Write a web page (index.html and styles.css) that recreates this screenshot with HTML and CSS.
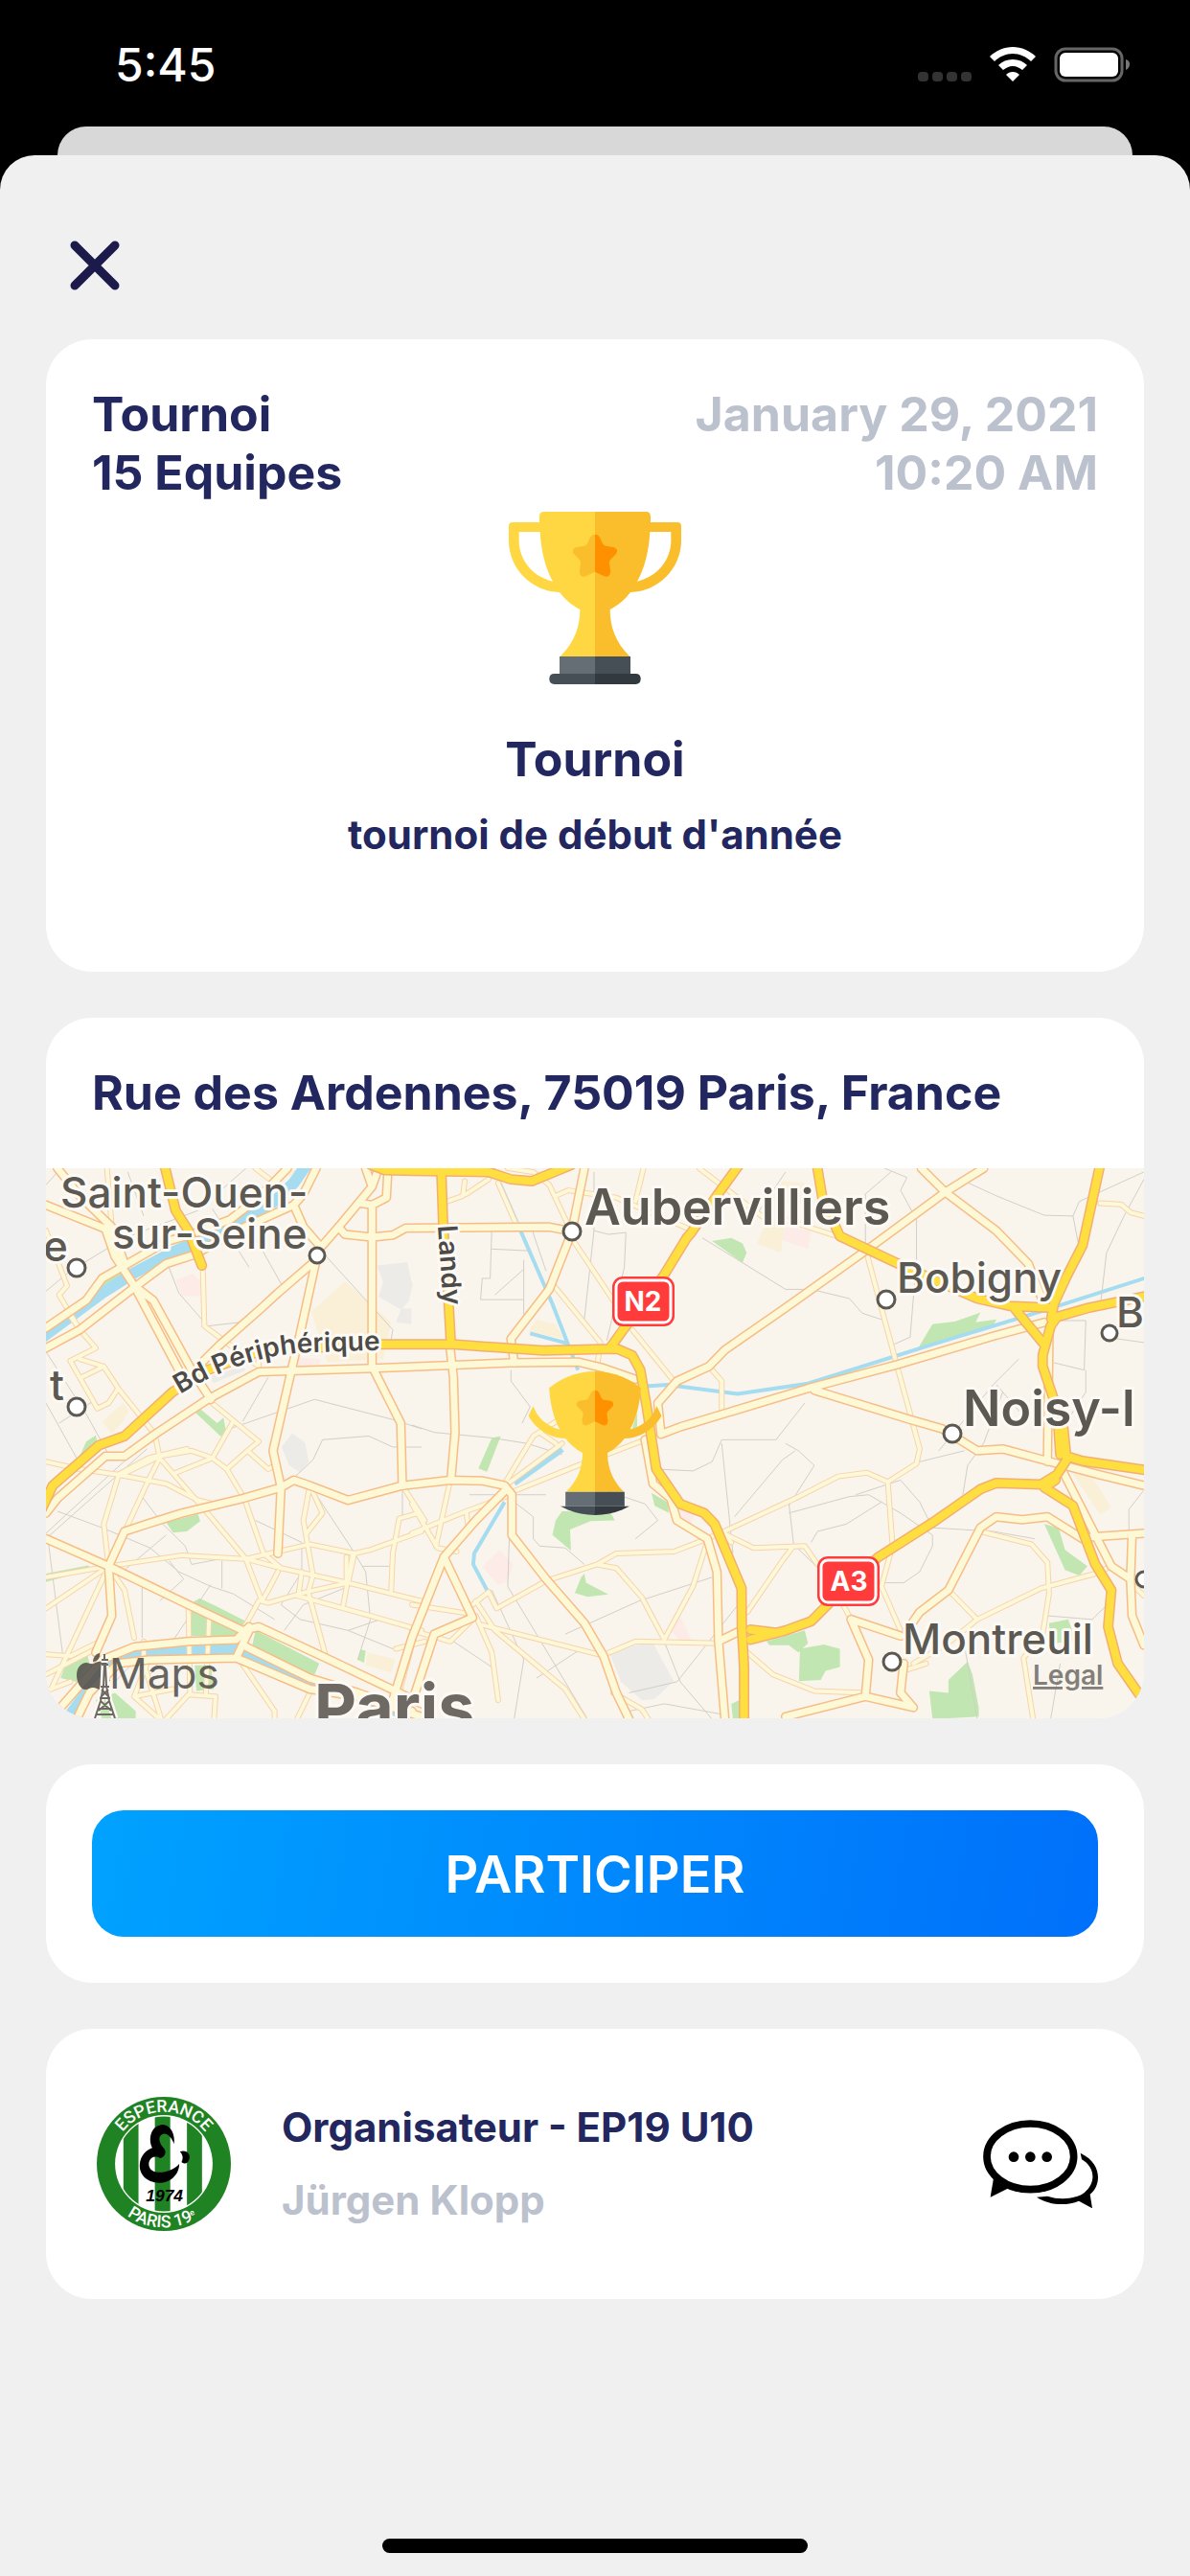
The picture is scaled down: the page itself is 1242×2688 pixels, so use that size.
FILE: index.html
```html
<!DOCTYPE html>
<html lang="fr">
<head>
    <meta charset="UTF-8">
    <meta name="viewport" content="width=device-width, initial-scale=1.0">
    <title>Tournoi</title>
    <link rel="stylesheet" href="styles.css">
</head>
<body>
    <!-- Shared drawings -->
    <svg class="defs" aria-hidden="true">
        <symbol id="trophy" viewBox="93 72 540 540">
            <g>
                <path fill-rule="evenodd" d="M364 72H203Q189 72 189 88V105H105Q93 105 93 117V162C93 250 165 322 252 324C268 345 290 365 316 378C316 430 300 480 254 525H364ZM125 135H191C194 195 208 250 231 290C170 276 125 225 125 162Z" fill="#ffd743"/>
                <path d="M363 143C354 143 350 148 346 156L339 172Q336 178 329 179L309 182C294 184 289 196 299 206L314 221Q319 226 318 233L315 255C313 270 322 280 336 273L363 260Z" fill="#fabe2c"/>
                <path d="M252 525H363V579H252Z" fill="#656d75"/>
                <path d="M363 579H236Q220 579 220 595Q220 612 236 612H363Z" fill="#474f56"/>
            </g>
            <g transform="translate(726) scale(-1 1)">
                <path fill-rule="evenodd" d="M363 72H203Q189 72 189 88V105H105Q93 105 93 117V162C93 250 165 322 252 324C268 345 290 365 316 378C316 430 300 480 254 525H363ZM125 135H191C194 195 208 250 231 290C170 276 125 225 125 162Z" fill="#fabe2c"/>
                <path d="M363 143C354 143 350 148 346 156L339 172Q336 178 329 179L309 182C294 184 289 196 299 206L314 221Q319 226 318 233L315 255C313 270 322 280 336 273L363 260Z" fill="#ff9100"/>
                <path d="M252 525H363V579H252Z" fill="#474f56"/>
                <path d="M363 579H236Q220 579 220 595Q220 612 236 612H363Z" fill="#32393f"/>
            </g>
        </symbol>
    </svg>

    <header class="status-bar">
        <span class="time">5:45</span>
        <svg class="status-icons" viewBox="0 0 222 38" aria-hidden="true">
            <g fill="#333">
                <rect x="0" y="26" width="11" height="10" rx="4"/>
                <rect x="15" y="26" width="11" height="10" rx="4"/>
                <rect x="30" y="26" width="11" height="10" rx="4"/>
                <rect x="45" y="26" width="11" height="10" rx="4"/>
            </g>
            <g fill="#fff">
                <path d="M99 0C108 0 117 4 123 10L118 15C113 10 106 7 99 7S85 10 80 15L75 10C81 4 90 0 99 0Z"/>
                <path d="M99 13C105 13 110 15 114 19L109 24C106 22 103 20 99 20S92 22 89 24L84 19C88 15 93 13 99 13Z"/>
                <path d="M99 26C102 26 104 27 106 29L99 36L92 29C94 27 96 26 99 26Z"/>
                <rect x="148" y="6" width="61" height="25" rx="6"/>
            </g>
            <rect x="144" y="2" width="69" height="33" rx="10" fill="none" stroke="#666" stroke-width="3"/>
            <path d="M217 13Q221 14 221 18T217 24Z" fill="#777"/>
        </svg>
    </header>
    <div class="back-sheet"></div>

    <main class="sheet">
        <button class="close-button" type="button" aria-label="Fermer">
            <svg viewBox="0 0 52 52"><path d="M5 5L47 47M47 5L5 47"/></svg>
        </button>

        <section class="card event">
            <div class="event-top">
                <p>Tournoi<br>15 Equipes</p>
                <p class="date">January 29, 2021<br>10:20 AM</p>
            </div>
            <svg class="trophy" role="img" aria-label="Trophée"><use href="#trophy"/></svg>
            <h1>Tournoi</h1>
            <p class="description">tournoi de début d'année</p>
        </section>

        <section class="card place">
            <h2>Rue des Ardennes, 75019 Paris, France</h2>
            <svg class="map" viewBox="0 0 1146 574">
                <defs>
                    <clipPath id="pinClip"><circle cx="573" cy="287" r="75"/></clipPath>
                    <path id="periphLine" d="M140 236Q210 193 280 192L370 189"/>
                    <path id="landyLine" d="M409 60L415 150"/>

                    <g id="minor">
                        <path d="M220 1135L450 1105L650 1115L760 1140L970 1180L1200 1230"/>
                        <path d="M24 1165L220 1135L24 1250M220 1135L40 1470M220 1135L270 1200L300 1330"/>
                        <path d="M220 1135L205 1020L250 890L380 835L480 820L545 840L590 870L645 950L705 1100L760 1140"/>
                        <path d="M220 1135L345 900L380 840L365 775M24 850L130 870L250 885L400 910L500 955L570 970"/>
                        <path d="M250 885L345 840L465 815M530 680L690 795L655 820L720 870L740 860M655 820L590 870M610 740L545 840L430 880"/>
                        <path d="M380 840L520 980L650 1115L700 1230L720 1235L840 1205L970 1180L990 1100L850 1075L650 1115"/>
                        <path d="M850 915L830 1010L860 1160L845 1205L900 1380M850 915L890 990L840 1045M985 1100L955 1240"/>
                        <path d="M700 1230L720 1200L750 1150M810 1215L1040 1270L1200 1310M990 1100L1040 1090L1200 1040M965 1110L965 1190M825 1150L815 1210"/>
                        <path d="M1140 915L1210 1010M1190 990L1130 1005L1110 1100L1105 1200M1200 1250L1130 1480M1120 1360L1210 1340"/>
                        <path d="M24 220L90 370L65 395L130 490L180 540L100 575L185 705L220 690L250 650L205 590L130 570M135 620L205 590M250 650L365 775"/>
                        <path d="M90 440L130 490M215 50L230 210M515 320L520 480L690 590M690 605L690 570M680 50L740 90M24 1375L100 1380L205 1335"/>
                        <path d="M345 1390L300 1490L380 1552M300 1490L420 1470M470 1240L475 1480M535 1275L525 1480M630 1390L740 1530L740 1552M550 1552L555 1490L470 1485L400 1552M850 1480L810 1552"/>
                        <path d="M24 1430L180 1360M24 1475L100 1450M330 1340L330 1400L385 1552M640 1310L690 1230"/>
                        <path d="M1670 240L1800 410M1895 50L1870 140M1610 365L1760 525L1750 590M1860 490L1990 630"/>
                        <path d="M1620 125L1660 110L1810 130L2050 220M1470 50L1550 60L1600 95L1670 225M1440 90L1500 210M1280 140L1330 125L1335 85M1340 120L1410 80"/>
                        <path d="M2100 590L2140 630L2140 715M1460 910L1550 780L1640 730M1470 910L1640 800M1490 930L1690 860L1900 790M1570 770L1620 800"/>
                        <path d="M1170 1045L1340 985L1480 940M1170 965L1250 1085L1310 1095M1290 900L1245 1080M1340 985L1345 1020"/>
                        <path d="M1590 1175L1750 1130L1810 1100L1990 1095L2095 1060M1750 1130L1810 1140L1890 1220L1960 1335L2050 1190L2090 1080"/>
                        <path d="M1360 1240L1410 1205L1435 1250L1590 1175M1775 1375L1870 1340L2130 1345M1390 1295L1775 1380"/>
                        <path d="M1170 1240L1355 1265M1170 1310L1290 1340L1360 1280M1370 1270L1420 1370L1440 1500M1370 1230L1430 1310L1650 1470L1710 1552M1800 1480L1890 1525L1910 1552"/>
                        <path d="M2095 1060L2160 1035L2370 950L2505 890L2595 880L2660 905L2750 855L2760 815L2680 560L2595 285"/>
                        <path d="M2660 905L2675 1080L2640 1190L2710 1330M2145 1045L2240 1085L2400 1080L2440 1130M2220 1260L2330 1120L2360 1085M2145 1045L2170 1070"/>
                        <path d="M2220 1370L2300 1430L2430 1475L2590 1480M2950 1040L3110 1075L3160 1125L3165 1210L3145 1320L3085 1385L3115 1552"/>
                        <path d="M2850 1200L2940 1280L2840 1350L2740 1400M2940 1280L3140 1195L3310 1155L3360 1135M3325 145L3390 148L3420 170L3462 180M2340 190L2500 235"/>
                        <path d="M2520 1240L2545 1280M2710 1420L2780 1400M3420 1180L3462 1215M2070 50L2160 110L2280 190"/>
                    </g>

                    <g id="major">
                        <path d="M24 485L150 410L200 350L280 310L400 250L480 230L600 190L660 150L730 95L780 50"/>
                        <path d="M24 540L130 490L300 375L400 310L490 285L620 220L800 150L830 120L870 50"/>
                        <path d="M60 50L130 125L230 210L270 310M24 150L210 215L240 290L300 370L440 600M300 370L360 410L480 600L540 680"/>
                        <path d="M800 150L830 210L885 265L940 210L1045 100L1025 50M1045 100L1065 50M1095 50L1090 130L1045 150L1010 145"/>
                        <path d="M870 300L750 390L700 430L570 530L500 590M870 300L820 500L790 610"/>
                        <path d="M1045 150V590L1135 745L1140 915M940 210L960 230L1045 238L1110 232L1150 213L1600 210L1672 222"/>
                        <path d="M24 990L60 950L210 835L270 835L365 775L530 680L690 605L1050 595L1480 580L1690 578L1770 595L1870 625"/>
                        <path d="M24 1060L220 1135L470 1240L640 1310L690 1300L900 1385L1130 1480L1200 1510"/>
                        <path d="M220 1135L270 1040L340 1020L450 990L640 950L760 920L800 900L850 915L970 955L1140 915L1290 900L1390 902L1460 915L1483 940V1050L1590 1170L1710 1290L1770 1380L1810 1480L1850 1552"/>
                        <path d="M220 1135L230 1270L180 1370M60 1530L200 1390L300 1355L470 1340L620 1335L660 1300M120 1552L160 1480L250 1400L345 1390L620 1385L850 1470L1000 1490L1200 1545M640 1350L850 1440L1000 1480L1170 1530M620 1385L660 1310"/>
                        <path d="M790 610L735 820L760 920L750 1100"/>
                        <path d="M1180 1480L1240 1320L1360 1275L1270 1110L1370 1010L1460 930M1270 1110L1170 1330L1110 1500M1290 545L1300 620L1305 770L1292 900"/>
                        <path d="M1490 580L1480 515L1600 380L1670 225L1710 50"/>
                        <path d="M3150 470L3000 505L2690 585L2410 650L2010 755L1950 775L1940 690L2000 630L2100 590L2150 545L2340 430L2590 275L2840 115L2960 50"/>
                        <path d="M2765 50L2840 115L3000 220L3100 310L3140 400M2430 655L2730 735L2830 760L2940 820L3020 815L3190 855L3320 885L3462 915M3165 500L3160 850"/>
                        <path d="M3210 880L3310 1050L3360 1135L3420 1170L3425 1050M3300 1055L3462 1045M3420 1170L3425 1270L3462 1350"/>
                        <path d="M2720 1310L2760 1260L2850 1200L2950 1030L3000 1000L3080 1008L3160 1000L3270 1060"/>
                        <path d="M2545 1280L2600 1390L2590 1490L2340 1545M2590 1490L2740 1520L2700 1480L2710 1400M2545 1280L2700 1325"/>
                        <path d="M1900 790L1925 910L1980 950L2000 1010L2095 1060L2125 1150L2130 1340L2150 1552M2130 1340L2200 1310"/>
                    </g>

                    <g id="motorway">
                        <path d="M396 45L430 165L470 220L512 315"/>
                        <path d="M1040 40L1085 55L1170 57L1410 60L1480 80L1545 85L1610 62L1670 40"/>
                        <path d="M1262 60L1268 210L1285 420L1292 530"/>
                        <path d="M10 980L45 915L190 805L270 780L420 660L530 600L690 550L850 540L1050 530L1300 530L1580 547L1770 543L1815 543L1860 560L1885 600L1905 700L1935 870L2010 965L2085 990L2118 1020L2202 1195L2203 1300L2210 1410V1560"/>
                        <path d="M1790 540L1840 480L1960 340L2030 240L2045 225L2120 130L2195 40"/>
                        <path d="M2230 1335L2340 1310L2420 1285L2540 1180L2630 1110L2810 1010L2950 925L3000 908L3140 912L3190 885L3220 845L3210 760L3180 680L3145 590V560L3170 480L3190 455L3290 430L3470 398"/>
                        <path d="M2230 1308L2310 1316"/>
                        <path d="M3325 40L3270 260L3220 345L3180 420L3172 460M3190 700L3200 830"/>
                        <path d="M2438 40L2455 130L2510 235L2680 305L2820 360L2940 405L3040 425L3160 430M3055 430L3145 525"/>
                        <path d="M3185 900L3150 920L3240 970L3310 1130L3360 1200L3350 1300L3380 1400L3460 1500M3220 835L3270 848L3470 873"/>
                    </g>
                </defs>

                <rect width="1146" height="574" fill="#f9f5ed"/>
                <g class="ground" transform="translate(-8 -19) scale(.3333 .3827)">
                    <g fill="#c1e6b1">
                        <path d="M195 365L275 325L285 340L210 375ZM485 710L510 708L560 745L580 730L590 780L570 780ZM150 795L180 778L185 800L130 835ZM400 1015L500 993L507 1012L465 1040L422 1043ZM24 1155L155 1133L170 1142L24 1178Z"/>
                        <path d="M480 1235L505 1222L560 1245L650 1285L620 1325H480ZM680 1310L880 1400L865 1430L800 1420L670 1350ZM70 1440L90 1390L150 1362L160 1400L120 1450ZM180 1500L240 1480L305 1530V1552H200ZM490 1405H540L550 1470L495 1475ZM1000 1390L1010 1362L1025 1365L1020 1398Z"/>
                        <path d="M2110 248L2170 240L2205 255L2218 280L2205 307ZM1420 785L1448 780L1405 877L1378 868ZM1640 985L1790 985L1805 1010L1730 1012L1665 1035L1668 1092L1610 1050L1620 1010ZM1680 1208L1700 1165L1710 1155L1715 1180L1785 1212L1720 1218ZM1920 935L1970 960L1975 990L1930 970ZM1860 760L1875 715V760Z"/>
                        <path d="M2755 540L2800 475L2870 468L2950 443L2935 470L3000 462L2990 480ZM3150 1020L3195 1030L3215 1090L3285 1135L3260 1160L3215 1145ZM2280 1340L2400 1310L2410 1345L2380 1370L2350 1350L2290 1350ZM2385 1360L2460 1348L2510 1360V1410L2465 1420L2450 1445L2382 1448ZM2790 1475L2850 1480V1445L2910 1395L2925 1430L2945 1520V1545L2800 1552ZM3165 1290L3225 1280L3250 1340L3170 1345ZM2170 1510L2195 1500V1552H2175Z"/>
                    </g>
                    <g fill="#faf0d8">
                        <path d="M855 440L960 358L1105 470L1080 570L905 578ZM200 740L265 690L285 710L265 740L230 775ZM1030 1370L1118 1388L1105 1425L1025 1405ZM1535 495L1560 462L1620 475L1645 515ZM2250 255L2285 185L2340 190L2325 280ZM3230 870L3300 890L3360 975L3325 995ZM2310 130L2330 85L2400 90V150ZM770 60L830 50L800 80Z"/>
                    </g>
                    <g fill="#fcebe7">
                        <path d="M430 355L485 337L515 365L510 398H450ZM810 565L885 570L875 590L810 590ZM1390 1135L1445 1090L1487 1130L1470 1175L1440 1187ZM1980 1310L2010 1270L2045 1335L2010 1340ZM2340 210L2420 220L2410 270L2330 245ZM2000 980L2055 990L2045 1020L2010 1010Z"/>
                    </g>
                    <g fill="#ecebe7">
                        <path d="M1060 315L1155 306L1172 370L1160 412L1140 432H1168V475L1120 470L1135 435L1065 400L1080 360ZM762 810L795 772L835 798L847 850L820 880L785 860ZM1790 1375L1845 1352L1925 1345L1990 1448L1930 1497L1890 1500L1825 1450ZM530 620L640 590L650 600L550 635Z"/>
                    </g>
                    <g class="water">
                        <path class="river" d="M10 512L200 390L300 335L430 275L530 240L650 180L740 140L800 90L840 40"/>
                        <path class="river" d="M100 1540L210 1410L300 1368L620 1362L820 1445L1020 1500L1200 1552"/>
                        <path d="M1445 90L1510 220L1610 420L1690 600M1540 500L1660 528M1460 960L1365 1100L1362 1130L1405 1200"/>
                        <path d="M1890 645L1970 640L2190 665L2410 637L2800 530L3140 440L3470 348"/>
                        <path class="basin" d="M1640 815L1490 908"/>
                    </g>
                    <g class="lanes">
                        <path d="M24 95L60 60M24 385L100 330L270 240L500 165L650 50M545 160L660 320M400 300L440 390L530 480L630 470M680 240L770 380M24 550L150 720L220 830M65 745L180 680M24 690L120 840M280 60L330 180"/>
                        <path d="M60 985L200 1030L350 1085L440 1150L540 1190L610 1210L740 1280M24 1045L330 800M30 1055L340 815M30 1060L80 1400M325 1180V1330M350 1430L540 1185M320 940L390 1020L460 1080L480 1130L570 1115M575 1120V1195"/>
                        <path d="M600 760L865 680L1110 735L1200 760M805 890L860 845L890 790L1035 780L1110 810H1200M680 1010L825 1070V1150L760 1240L820 1280L970 1310L1110 1360M855 920L980 1085L1025 1150L1040 1280L1000 1390M1015 1135H1100M1140 930V1000"/>
                        <path d="M870 260L1110 490L1100 540M640 740L720 620M250 1160L400 1050M410 1120L455 1170L380 1230M770 1310L830 1240L1000 1180M970 1310L1070 1280M350 1350L240 1450"/>
                        <path d="M1420 215L1415 350L1390 350L1385 408H1520M1520 300V450M1545 215L1590 330M1420 270L1540 275M1740 60V220L1785 230L1840 225L1835 320L1780 520M1740 220L1710 460M1520 325L1430 395"/>
                        <path d="M1170 750L1240 770L1420 785L1530 800L1640 830M1480 600V630L1540 700L1515 745M1490 960L1550 1000V1060L1570 1080L1650 1085L1710 1130M1475 1050L1470 1190L1560 1320L1720 1552M1350 940L1590 940M1420 1200L1520 1390L1490 1552M1300 1340L1420 1410"/>
                        <path d="M2080 240L2340 380L2420 380L2540 405L2580 445L2640 462M1780 930L1900 965L1940 1010L1870 1060M1930 870L2050 875L2110 850L2140 790L2310 790L2400 690M2140 800L2175 1100M2180 1000L2330 845L2370 820M1850 1480L2000 1450L2200 1230"/>
                        <path d="M1650 1320L1880 1230L2110 1165M1960 1340L2010 1450L2110 1552M1560 1440L1700 1360M1850 1530L1960 1510L2150 1540M2230 200L2340 60"/>
                        <path d="M2590 265L2590 120L2670 60M2900 85L3000 125L3150 178L3240 180L3260 270M3240 180L3260 140L3462 60M3462 80L3400 180L3345 280L3325 430M2650 50L2720 75L2700 110L2750 190V300L2730 510L2680 530"/>
                        <path d="M3190 465L3280 465L3275 600L3180 580M3280 600V660L3220 740M3070 570L2990 640L2820 820M3020 660L2960 800L2910 860L2895 940M2760 850L2900 820M3000 640L3100 740M3340 510L3462 525M2350 990L2540 945L2600 940L2700 990L2800 1050V1080L2760 1150L2710 1180H2650"/>
                        <path d="M2350 960L2365 1075L2430 1130M2420 1070L2440 1040L2530 1020L2640 960M2560 940L2700 900L2760 960L2800 1030L2990 1040L3120 1060M3160 1270L3300 1280L3370 1220M3460 930L3415 980V1050M2900 1350L2940 1552M3200 1400L3170 1552M2340 800L2380 820L2430 860L2350 970"/>
                    </g>
                    <use href="#minor" class="minor-casing"/>
                    <use href="#minor" class="minor-fill"/>
                    <use href="#major" class="major-casing"/>
                    <use href="#major" class="major-fill"/>
                    <use href="#motorway" class="motorway-casing"/>
                    <use href="#motorway" class="motorway-fill"/>
                </g>

                <g class="towns">
                    <circle cx="32" cy="104" r="9"/>
                    <circle cx="32" cy="249" r="9"/>
                    <circle cx="283" cy="91" r="8"/>
                    <circle cx="549" cy="66" r="9"/>
                    <circle cx="877" cy="137" r="9"/>
                    <circle cx="1110" cy="172" r="8"/>
                    <circle cx="946" cy="277" r="9"/>
                    <circle cx="883" cy="515" r="9"/>
                    <circle cx="1146" cy="429" r="8"/>
                </g>

                <g class="labels">
                    <text class="town" x="15" y="41">Saint-Ouen-</text>
                    <text class="town" x="69" y="84">sur-Seine</text>
                    <text class="town" x="-3" y="97">e</text>
                    <text class="town" x="4" y="242">t</text>
                    <text class="city" x="562" y="59">Aubervilliers</text>
                    <text class="town" x="888" y="130">Bobigny</text>
                    <text class="town" x="1117" y="166">B</text>
                    <text class="city" x="957" y="269">Noisy-l</text>
                    <text class="town" x="894" y="507">Montreuil</text>
                    <text class="capital" x="280" y="587">Paris</text>
                    <text class="street"><textPath href="#periphLine">Bd Périphérique</textPath></text>
                    <text class="street"><textPath href="#landyLine">Landy</textPath></text>
                </g>

                <g class="shields">
                    <rect class="plate" x="591" y="113" width="65" height="52" rx="11"/>
                    <rect class="frame" x="595" y="117" width="57" height="44" rx="7"/>
                    <text x="623" y="149">N2</text>
                    <rect class="plate" x="805" y="405" width="65" height="52" rx="11"/>
                    <rect class="frame" x="809" y="409" width="57" height="44" rx="7"/>
                    <text x="838" y="441">A3</text>
                </g>

                <!-- Maps attribution -->
                <g class="attribution">
                    <path d="M50 517C54 515 60 512 66 519C60 523 61 531 67 534C65 539 61 544 57 544C54 544 52 542 49 542C46 542 44 544 41 544C36 544 32 536 32 529C32 521 37 516 42 516C45 516 47 518 50 517ZM49 515C49 510 53 506 56 506C57 511 53 515 49 515Z"/>
                    <text x="66" y="543">Maps</text>
                </g>
                <a href="#legal"><text class="legal" x="1030" y="539">Legal</text></a>

                <!-- Eiffel tower -->
                <g class="eiffel">
                    <path class="halo" d="M61 508V516M61 518L60 540L57 556L51 574M62 518L63 540L66 556L72 574"/>
                    <path d="M61 507V514M58 513H65M58 518H65M61 518L60 540L57 556L51 574M62 518L63 540L66 556L72 574M57 541H66M56 553H67M54 564H69M52 570H71M57 556L68 566M66 556L55 566M58 544L66 552M65 544L57 552"/>
                </g>

                <g clip-path="url(#pinClip)">
                    <use href="#trophy" x="498" y="212" width="150" height="150"/>
                </g>
            </svg>
        </section>

        <section class="card action">
            <button class="join-button" type="button">PARTICIPER</button>
        </section>

        <section class="card organiser">
            <svg class="club-logo" viewBox="67 89 418 418" role="img" aria-label="Esperance Paris 19e">
                <defs>
                    <clipPath id="crestClip"><circle cx="276" cy="298" r="148"/></clipPath>
                    <path id="crestTop" d="M114 298A162 162 0 0 1 438 298"/>
                    <path id="crestBottom" d="M78 298A198 198 0 0 0 474 298"/>
                </defs>
                <circle cx="276" cy="298" r="209" fill="#208323"/>
                <circle cx="276" cy="298" r="152" fill="#fff"/>
                <path clip-path="url(#crestClip)" d="M150 140H197V460H150ZM248 140H296V460H248ZM348 140H395V460H348Z" fill="#208323"/>
                <path d="M308 236C300 212 282 198 270 206C256 214 262 235 277 250C286 262 278 278 264 280C240 266 222 290 232 310C245 335 300 325 324 298C324 335 292 358 260 357C222 355 198 330 201 298C204 270 222 255 240 248C226 220 236 180 268 176C296 174 312 205 308 236Z"/>
                <path d="M326 260C345 253 358 266 356 280C352 298 340 300 331 292C337 282 336 270 326 260Z"/>
                <text class="crest-ring" text-anchor="middle"><textPath href="#crestTop" startOffset="50%">ESPERANCE</textPath></text>
                <text class="crest-ring" text-anchor="middle"><textPath href="#crestBottom" startOffset="49%">PARIS 19<tspan font-size="26" dy="-14">e</tspan></textPath></text>
                <text class="crest-year" x="278" y="415" text-anchor="middle">1974</text>
            </svg>
            <div class="organiser-text">
                <p>Organisateur - EP19 U10</p>
                <p class="coach">Jürgen Klopp</p>
            </div>
            <button class="chat-button" type="button" aria-label="Message">
                <svg viewBox="78 98 360 276">
                    <ellipse cx="226" cy="213" rx="136" ry="103" fill="none" stroke="#000" stroke-width="23"/>
                    <path d="M111 280L101 340L158 312Z"/>
                    <circle cx="174" cy="214" r="16"/>
                    <circle cx="226" cy="214" r="16"/>
                    <circle cx="278" cy="214" r="16"/>
                    <path d="M383 202C425 222 438 252 438 278C438 300 428 320 413 331L420 375L378 352C340 368 285 366 246 340L280 337C318 350 370 346 395 326C434 295 428 245 387 222Z"/>
                </svg>
            </button>
        </section>
        <div class="home-indicator"></div>
    </main>
</body>
</html>
```

FILE: styles.css
```css
* {
    box-sizing: border-box;
}

body {
    margin: 0;
    min-height: 100vh;
    display: flex;
    flex-direction: column;
    font-family: Inter, "Liberation Sans", sans-serif;
    font-weight: 700;
    background-color: #000000;
    color: #222760;
}

h1, h2, p {
    margin: 0;
    font-size: 50px;
    font-weight: 700;
    line-height: 61px;
}

button {
    padding: 0;
    border: none;
    background: none;
    font-family: inherit;
    cursor: pointer;
}

svg {
    display: block;
}

.defs {
    position: absolute;
    width: 0;
    height: 0;
}

/* Status bar */
.status-bar {
    height: 132px;
    padding: 4px 62px 0 120px;
    display: flex;
    align-items: center;
    justify-content: space-between;
    color: #ffffff;
}

.time {
    font-size: 48px;
    font-weight: 500;
    line-height: 60px;
}

.status-icons {
    width: 222px;
    height: 38px;
}

/* Modal sheet */
.back-sheet {
    height: 30px;
    margin: 0 60px;
    border-radius: 30px 30px 0 0;
    background-color: #d8d8d8;
}

.sheet {
    flex: 1;
    padding: 86px 48px 24px;
    display: flex;
    flex-direction: column;
    gap: 48px;
    border-radius: 36px 36px 0 0;
    background-color: #f0f0f0;
}

.close-button {
    width: 60px;
    height: 58px;
    margin-left: 21px;
    padding: 3px 4px;
}

.close-button path {
    fill: none;
    stroke: #1b1a4b;
    stroke-width: 9;
    stroke-linecap: round;
}

.card {
    padding: 48px;
    border-radius: 48px;
    background-color: #ffffff;
}

/* Event card */
.event {
    padding-bottom: 118px;
    text-align: center;
}

.event-top {
    display: flex;
    justify-content: space-between;
    text-align: left;
}

.event-top .date {
    text-align: right;
    color: #bcc1ce;
}

.trophy {
    width: 180px;
    height: 180px;
    margin: 10px auto 48px;
}

.event .description {
    margin-top: 23px;
    font-size: 42px;
    line-height: 50px;
}

/* Map card */
.place {
    padding: 0;
    overflow: hidden;
}

.place h2 {
    padding: 48px;
}

.map {
    width: 100%;
}

.map path {
    vector-effect: non-scaling-stroke;
}

.ground use {
    fill: none;
    stroke-linejoin: round;
    stroke-linecap: round;
}

.lanes {
    fill: none;
    stroke: #d2cfc8;
    stroke-width: 1;
}

.water {
    fill: none;
    stroke: #a5dcf0;
    stroke-width: 4;
}

.water .river {
    stroke-width: 12;
}

.water .basin {
    stroke-width: 7;
}

.minor-casing {
    stroke: #f7d3ae;
    stroke-width: 6;
}

.minor-fill {
    stroke: #fdf8d8;
    stroke-width: 4;
}

.major-casing {
    stroke: #f6bd87;
    stroke-width: 10;
}

.major-fill {
    stroke: #fdf9d6;
    stroke-width: 7;
}

.motorway-casing {
    stroke: #f3af72;
    stroke-width: 11;
}

.motorway-fill {
    stroke: #ffdf3f;
    stroke-width: 8;
}

.towns circle {
    fill: #ffffff;
    stroke: #5c5953;
    stroke-width: 3;
}

.labels text {
    fill: #5c5953;
    stroke: #fdfaf5;
    stroke-width: 6px;
    stroke-linejoin: round;
    paint-order: stroke;
}

.labels .town {
    font-size: 44px;
    font-weight: 500;
}

.labels .city {
    font-size: 52px;
    font-weight: 600;
}

.labels .capital {
    font-size: 68px;
    font-weight: 700;
    fill: #6e6963;
}

.labels .street {
    font-size: 28px;
    font-weight: 600;
    fill: #4d4b48;
}

.shields text {
    font-size: 28px;
    font-weight: 700;
    text-anchor: middle;
    fill: #ffffff;
}

.shields .plate {
    fill: #ff3b3b;
}

.shields .frame {
    fill: none;
    stroke: #ffffff;
    stroke-width: 3;
}

.eiffel path {
    fill: none;
    stroke: #6e6963;
    stroke-width: 2;
}

.eiffel .halo {
    stroke: #fdfaf5;
    stroke-width: 7;
}

.attribution {
    fill: #4d4b48;
    opacity: .85;
    font-size: 44px;
    font-weight: 400;
}

.legal {
    font-size: 28px;
    font-weight: 600;
    fill: #827f7a;
    text-decoration: underline;
}

/* Join button */
.join-button {
    width: 100%;
    height: 132px;
    border-radius: 33px;
    background-image: linear-gradient(100deg, #00a2ff, #0070fa);
    color: #ffffff;
    font-size: 54px;
    font-weight: 600;
}

/* Organiser card */
.organiser {
    min-height: 282px;
    display: flex;
    align-items: center;
    gap: 48px;
}

.club-logo {
    width: 140px;
    height: 140px;
    margin: 0 5px;
}

.crest-ring {
    font-family: Roboto, sans-serif;
    font-size: 53px;
    font-weight: 500;
    fill: #ffffff;
}

.crest-year {
    font-family: "Liberation Sans", sans-serif;
    font-size: 52px;
    font-weight: 700;
    font-style: italic;
}

.organiser-text {
    flex: 1;
    display: flex;
    flex-direction: column;
    gap: 26px;
}

.organiser-text p {
    font-size: 42px;
    line-height: 50px;
}

.organiser-text .coach {
    color: #bcc1ce;
}

.chat-button {
    width: 120px;
}

.home-indicator {
    width: 444px;
    height: 15px;
    margin: auto auto 0;
    border-radius: 8px;
    background-color: #000000;
}
```
